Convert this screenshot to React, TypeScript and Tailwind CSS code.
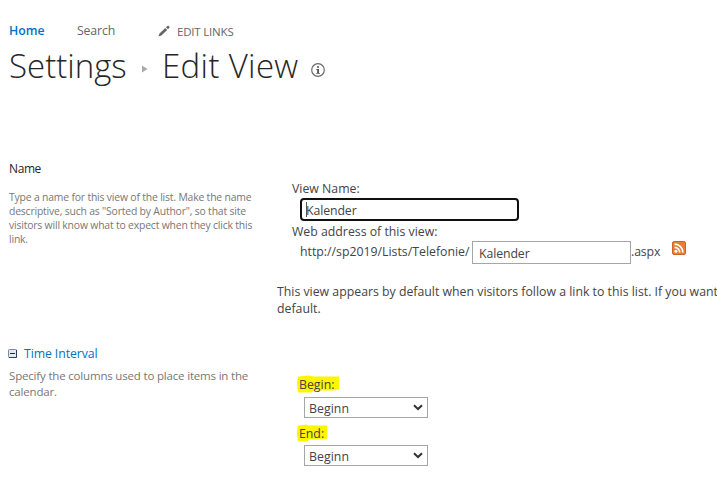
import React from "react";

function Pencil() {
  return (
    <svg width="12" height="12" viewBox="0 0 12 12" className="block" fill="#666">
      <path d="M0.4 11.6 1.5 8.6 7.3 3 9.2 4.9 3.4 10.5Z" />
      <path d="M8 2.3 9.3 1Q10 0.3 10.8 1L11.2 1.4Q11.9 2 11.2 2.9L9.9 4.2Z" />
    </svg>
  );
}

function Info() {
  return (
    <svg width="14" height="14" viewBox="0 0 14 14" className="block">
      <circle cx="7" cy="7" r="6.3" fill="none" stroke="#6a6a6a" strokeWidth="1.2" />
      <path d="M6 3.2h2v1.6H6zM5.2 5.9H8v4h1v.9H5.1v-.9h1V6.8h-.9z" fill="#555" />
    </svg>
  );
}

function Rss() {
  return (
    <svg width="14" height="14" viewBox="0 0 14 14" className="block">
      <rect x="0.5" y="0.5" width="13" height="13" rx="1.5" fill="#ea7d35" stroke="#cc6526" />
      <circle cx="3.9" cy="10.3" r="1.5" fill="#fff" />
      <path d="M2.6 6.3a5.1 5.1 0 0 1 5.1 5.1M2.6 3.1a8.3 8.3 0 0 1 8.3 8.3" fill="none" stroke="#fff" strokeWidth="1.7" />
    </svg>
  );
}

function Collapse() {
  return (
    <svg width="9" height="9" viewBox="0 0 9 9" className="block">
      <rect x="0.5" y="0.5" width="8" height="8" rx="0.8" fill="#e3e7f1" stroke="#8088a3" />
      <path d="M1 8.5h7.5V1" fill="none" stroke="#303c68" />
      <path d="M2 4.5h5" stroke="#17225a" />
    </svg>
  );
}

function Select({ value }: { value: string }) {
  return (
    <div className="ml-[6px] flex h-[21px] w-[124px] items-center justify-between border border-[#a6a6a6] bg-white pl-[4px] pr-[4px]">
      <span className="relative top-px text-[12.3px] tracking-[0.05px]">{value}</span>
      <svg width="10" height="7" viewBox="0 0 10 7" className="block">
        <path d="M1 1.2 5 5 9 1.2" fill="none" stroke="#333" strokeWidth="2" />
      </svg>
    </div>
  );
}

function Marked({ text, width }: { text: string; width: number }) {
  return (
    <div className="relative">
      <svg width={width} height="18" className="absolute -left-[2px] -top-px" preserveAspectRatio="none" viewBox="0 0 42 18">
        <path d="M1 1.5 12 0.5 16 1.5H41V14.5L35 15.5 17 15.5 14 17.5H1L0 8Z" fill="#fff500" />
      </svg>
      <span className="relative">{text}</span>
    </div>
  );
}

export default function App() {
  return (
    <div className="h-[491px] w-[717px] overflow-hidden whitespace-nowrap bg-white font-['Open_Sans','Noto_Sans',sans-serif] text-[12.3px] leading-[17px] text-[#444]">
      <nav className="flex h-[46px] pl-[9px] pt-[22px]">
        <span className="w-[68px] font-semibold text-[#0072c6]">Home</span>
        <span className="w-[81px] tracking-[-0.15px] text-[#666]">Search</span>
        <span className="w-[19px] pt-[3px]"><Pencil /></span>
        <span className="pt-px text-[11.5px] tracking-[-0.2px] text-[#666]">EDIT LINKS</span>
      </nav>
      <h1 className="flex h-[40px] pl-[9px] text-[33px] font-light leading-[40px] text-[#262626]">
        <span className="w-[133px]">Settings</span>
        <svg width="6" height="8" viewBox="0 0 6 8" className="mr-[14px] mt-[19px] block">
          <path d="M0 0.5 5.5 4 0 7.5Z" fill="#aaa" />
        </svg>
        <span className="w-[149px] tracking-[0.35px]">Edit View</span>
        <span className="pt-[17px]"><Info /></span>
      </h1>

      <section className="flex h-[259px] pt-[74px]">
        <div className="w-[277px] shrink-0 pl-[9px]">
          <h2 className="text-[12px] tracking-[-0.4px] text-[#262626]">Name</h2>
          <p className="pt-[13px] text-[10.4px] leading-[14px] tracking-[-0.18px] text-[#777]">
            Type a name for this view of the list. Make the name<br />
            descriptive, such as "Sorted by Author", so that site<br />
            visitors will know what to expect when they click this<br />
            link.
          </p>
        </div>
        <div className="shrink-0 pt-[20px]">
          <div className="pl-[15px]">
            <div className="h-[18px]">View Name:</div>
            <div className="ml-[8px] flex h-[23px] w-[219px] items-center rounded-[4px] border-2 border-[#101010] pl-[4px]">
              <span className="h-[15px] w-px bg-[#555]" />
              <span className="relative top-px -ml-px tracking-[-0.1px]">Kalender</span>
            </div>
            <div className="pt-[2px]">Web address of this view:</div>
            <div className="flex pl-[8px]">
              <span className="w-[172px] pt-[3px]">http://sp2019/Lists/Telefonie/</span>
              <span className="mt-px flex h-[23px] w-[159px] items-center border border-[#a6a6a6] pl-[6px] pt-[2px] tracking-[-0.1px]">Kalender</span>
              <span className="w-[41px] pt-[3px] tracking-[-0.1px]">.aspx</span>
              <span className="pt-px"><Rss /></span>
            </div>
          </div>
          <p className="pt-[19px]">
            This view appears by default when visitors follow a link to this list. If you want<br />
            default.
          </p>
        </div>
      </section>

      <section className="flex">
        <div className="w-[299px] shrink-0 pl-[8px]">
          <h2 className="flex tracking-[-0.1px] text-[#0072c6]">
            <span className="w-[16px] pt-[4px]"><Collapse /></span>
            Time Interval
          </h2>
          <p className="pl-px pt-[6px] text-[11.5px] leading-[16px] tracking-[-0.18px] text-[#777]">
            Specify the columns used to place items in the<br />
            calendar.
          </p>
        </div>
        <div className="-ml-px pt-[31px]">
          <div className="h-[21px] pl-px">
            <Marked text="Begin:" width={43} />
          </div>
          <Select value="Beginn" />
          <div className="h-[27px] pl-px pt-[7px]">
            <Marked text="End:" width={31} />
          </div>
          <Select value="Beginn" />
        </div>
      </section>
    </div>
  );
}
